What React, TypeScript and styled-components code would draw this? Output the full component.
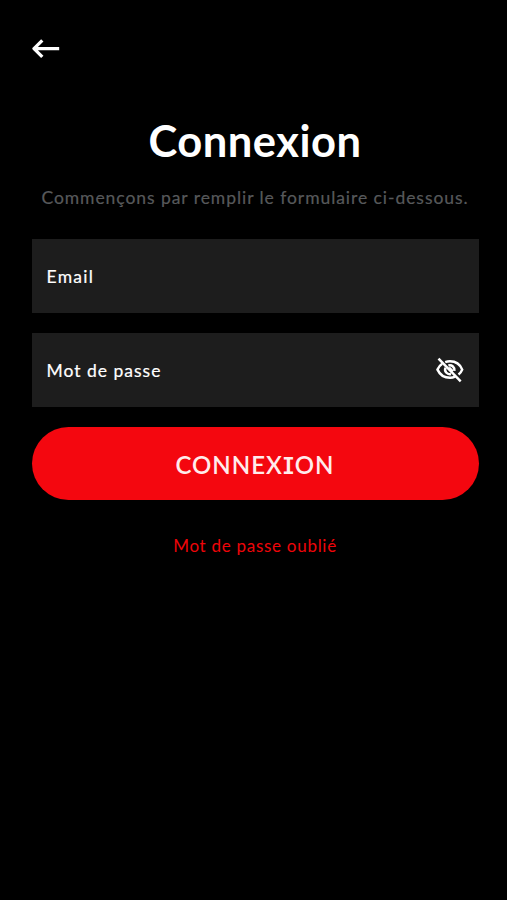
import React from "react";
import styled, { createGlobalStyle } from "styled-components";

const GlobalStyle = createGlobalStyle`
  *, *::before, *::after { box-sizing: border-box; }
  body { margin: 0; background: #000; }
  button { font: inherit; border: 0; margin: 0; padding: 0; }
`;

const Screen = styled.main`
  min-height: 100vh;
  padding: 34px 28.5px 0 31.5px;
  background: #000;
  color: #fff;
  font-family: Lato, "Open Sans", sans-serif;
  overflow: hidden;
`;

const BackButton = styled.button`
  display: flex;
  width: 28px;
  height: 29px;
  align-items: center;
  background: none;
  color: #fff;
`;

const Title = styled.h1`
  display: flex;
  justify-content: center;
  margin: 50px 0 0;
  font-size: 43.5px;
  line-height: 54px;
  font-weight: 700;
  letter-spacing: 0.5px;
`;

const Subtitle = styled.p`
  display: flex;
  justify-content: center;
  margin: 18px 0 0;
  color: #57595b;
  font-size: 17.5px;
  line-height: 26px;
  letter-spacing: 0.94px;
  white-space: nowrap;
  -webkit-text-stroke: 0.2px currentColor;
`;

const Form = styled.form`
  display: flex;
  flex-direction: column;
  gap: 20px;
  margin-top: 28px;
`;

const Field = styled.label`
  display: flex;
  width: 447px;
  height: 74px;
  padding: 0 15px;
  align-items: center;
  justify-content: space-between;
  background: #1d1d1d;
`;

const FieldLabel = styled.span<{ $tracking: number }>`
  padding-top: 2px;
  font-size: 17.5px;
  line-height: 26px;
  letter-spacing: ${({ $tracking }) => $tracking}px;
  -webkit-text-stroke: 0.2px currentColor;
`;

const Submit = styled.button`
  display: flex;
  width: 447px;
  height: 73px;
  padding-top: 3px;
  align-items: center;
  justify-content: center;
  border-radius: 37px;
  background: #f4070f;
  color: #ffecec;
  font-size: 24px;
  font-weight: 600;
  line-height: 30px;
  letter-spacing: 1px;
`;

const SerifI = styled.span`
  font-family: Inter, sans-serif;
  font-feature-settings: "cv08" 1;
  font-weight: 600;
  font-size: 23.5px;
`;

const ForgotLink = styled.a`
  display: flex;
  justify-content: center;
  margin-top: 33px;
  color: #ee0509;
  font-size: 17px;
  line-height: 26px;
  letter-spacing: 0.72px;
`;

export default function App() {
  return (
    <Screen>
      <GlobalStyle />
      <BackButton aria-label="Retour">
        <svg width="28" height="20" viewBox="0 0 28 20" fill="none" stroke="currentColor" strokeWidth="3.3" strokeLinejoin="round">
          <path d="M27.2 9.6H2M10.3 1.4L2 9.6L10.3 17.8" />
        </svg>
      </BackButton>
      <Title>Connexion</Title>
      <Subtitle>Commençons par remplir le formulaire ci-dessous.</Subtitle>
      <Form>
        <Field>
          <FieldLabel $tracking={1.3}>Email</FieldLabel>
        </Field>
        <Field>
          <FieldLabel $tracking={1}>Mot de passe</FieldLabel>
          <svg width="28" height="26" viewBox="0 0 28 26" fill="none" stroke="#fff" strokeWidth="2.5">
            <path d="M9.2 5.2C10.7 4.6 12.3 4.3 14 4.3C19.5 4.3 24 7.2 26.2 12.6C25.4 14.6 24.2 16.2 22.5 17.5M6.2 6.8C4.2 8.1 2.6 10 1.5 12.6C4 18 8.6 20.8 14 20.8C15.9 20.8 17.6 20.4 19.2 19.7" />
            <path d="M12.4 8.5C15.8 7.5 19 10.2 18.4 13.9M9.5 10.7C8 14.2 11 17.8 15 17" />
            <path d="M2.5 1.6L24.7 24.3" />
            <path d="M13.2 10.4L17 14.2" strokeWidth="2" />
          </svg>
        </Field>
        <Submit type="button">
          <span>CONNEX<SerifI>I</SerifI>ON</span>
        </Submit>
      </Form>
      <ForgotLink>Mot de passe oublié</ForgotLink>
    </Screen>
  );
}
